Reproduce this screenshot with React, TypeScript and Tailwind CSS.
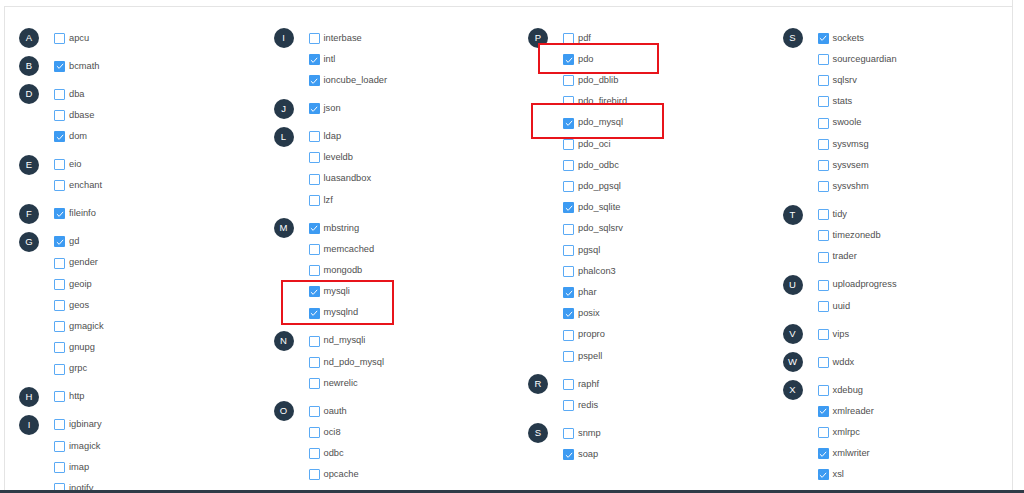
type Ext = [string, boolean, boolean?]

interface Group {
  letter: string
  items: Ext[]
}

const columns: Group[][] = [
  [
    { letter: 'A', items: [['apcu', false]] },
    { letter: 'B', items: [['bcmath', true]] },
    { letter: 'D', items: [['dba', false], ['dbase', false], ['dom', true]] },
    { letter: 'E', items: [['eio', false], ['enchant', false]] },
    { letter: 'F', items: [['fileinfo', true]] },
    {
      letter: 'G',
      items: [['gd', true], ['gender', false], ['geoip', false], ['geos', false], ['gmagick', false], ['gnupg', false], ['grpc', false]],
    },
    { letter: 'H', items: [['http', false]] },
    { letter: 'I', items: [['igbinary', false], ['imagick', false], ['imap', false], ['inotify', false]] },
  ],
  [
    { letter: 'I', items: [['interbase', false], ['intl', true], ['ioncube_loader', true]] },
    { letter: 'J', items: [['json', true]] },
    { letter: 'L', items: [['ldap', false], ['leveldb', false], ['luasandbox', false], ['lzf', false]] },
    {
      letter: 'M',
      items: [['mbstring', true], ['memcached', false], ['mongodb', false], ['mysqli', true, true], ['mysqlnd', true, true]],
    },
    { letter: 'N', items: [['nd_mysqli', false], ['nd_pdo_mysql', false], ['newrelic', false]] },
    { letter: 'O', items: [['oauth', false], ['oci8', false], ['odbc', false], ['opcache', false]] },
  ],
  [
    {
      letter: 'P',
      items: [
        ['pdf', false], ['pdo', true, true], ['pdo_dblib', false], ['pdo_firebird', false], ['pdo_mysql', true, true],
        ['pdo_oci', false], ['pdo_odbc', false], ['pdo_pgsql', false], ['pdo_sqlite', true], ['pdo_sqlsrv', false],
        ['pgsql', false], ['phalcon3', false], ['phar', true], ['posix', true], ['propro', false], ['pspell', false],
      ],
    },
    { letter: 'R', items: [['raphf', false], ['redis', false]] },
    { letter: 'S', items: [['snmp', false], ['soap', true]] },
  ],
  [
    {
      letter: 'S',
      items: [
        ['sockets', true], ['sourceguardian', false], ['sqlsrv', false], ['stats', false],
        ['swoole', false], ['sysvmsg', false], ['sysvsem', false], ['sysvshm', false],
      ],
    },
    { letter: 'T', items: [['tidy', false], ['timezonedb', false], ['trader', false]] },
    { letter: 'U', items: [['uploadprogress', false], ['uuid', false]] },
    { letter: 'V', items: [['vips', false]] },
    { letter: 'W', items: [['wddx', false]] },
    { letter: 'X', items: [['xdebug', false], ['xmlreader', true], ['xmlrpc', false], ['xmlwriter', true], ['xsl', true]] },
  ],
]

function Checkbox({ checked }: { checked: boolean }) {
  if (checked) {
    return (
      <span className="flex h-[11px] w-[11px] shrink-0 items-center justify-center rounded-[1px] bg-[#3d9bf2]">
        <svg viewBox="0 0 12 12" className="h-[10px] w-[10px]">
          <path d="M2.3 6.2 L5 8.8 L9.8 3.4" fill="none" stroke="#fff" strokeWidth="1.2" />
        </svg>
      </span>
    )
  }
  return <span className="h-[11px] w-[11px] shrink-0 rounded-[1px] border border-[#5aaaf5] bg-white" />
}

function Row({ ext }: { ext: Ext }) {
  const [name, checked, marked] = ext
  return (
    <div className={`flex h-[21.2px] items-center gap-[4px] ${marked ? 'relative z-10' : ''}`}>
      <Checkbox checked={checked} />
      <span className="text-[9.3px] leading-none text-[#4f4f4f]">{name}</span>
    </div>
  )
}

function LetterGroup({ group }: { group: Group }) {
  return (
    <div className="mb-[6.8px] flex">
      <div className="flex h-[21.2px] w-5 shrink-0 items-center">
        <span className="flex h-5 w-5 items-center justify-center rounded-full bg-[#26394a] text-[9.5px] text-white">
          {group.letter}
        </span>
      </div>
      <div className="ml-[15px] flex flex-col">
        {group.items.map((ext) => (
          <Row key={ext[0]} ext={ext} />
        ))}
      </div>
    </div>
  )
}

export default function App() {
  return (
    <div className="relative flex h-[493px] w-[1024px] flex-col overflow-hidden bg-white font-['Liberation_Sans',Arial,sans-serif]">
      <div className="ml-[4px] flex w-[1009px] flex-1 flex-col overflow-hidden border-r border-[#e4e4e4]">
        <div className="h-[7px] shrink-0 border-b border-[#e4e4e4]" />
        <div className="flex-1 overflow-hidden border-l border-[#e4e4e4] pl-[14px] pt-[20.8px]">
          <div className="grid w-[1018px] grid-cols-4">
            {columns.map((col, i) => (
              <div key={i} className="flex flex-col">
                {col.map((g) => (
                  <LetterGroup key={g.letter + i} group={g} />
                ))}
              </div>
            ))}
          </div>
        </div>
      </div>
      <div className="h-[3px] shrink-0 bg-[#2e3b47]" />

      {/* annotation boxes */}
      <div className="absolute left-[281px] top-[280px] z-[5] h-[45px] w-[113px] border-2 border-[#e8141b] bg-white" />
      <div className="absolute left-[538px] top-[43px] z-[5] h-[31px] w-[121px] border-2 border-[#e8141b] bg-white" />
      <div className="absolute left-[531px] top-[103px] z-[5] h-[36px] w-[133px] border-2 border-[#e8141b] bg-white" />
    </div>
  )
}
